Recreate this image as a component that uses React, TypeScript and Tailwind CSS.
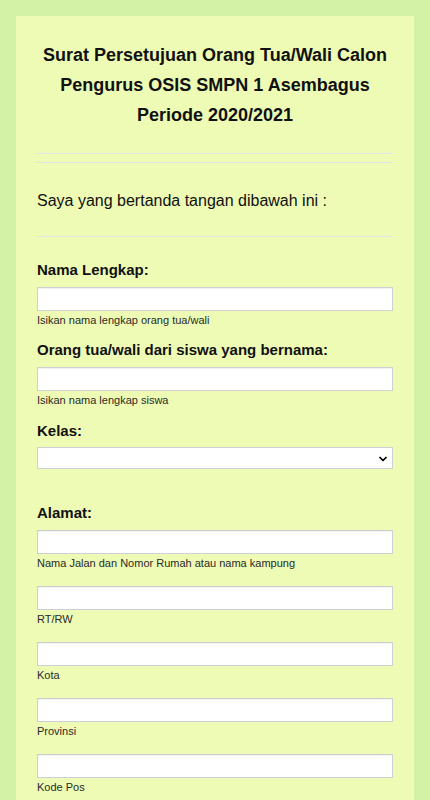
import { ChevronDown } from "lucide-react";

function Field({ label, help }: { label?: string; help: string }) {
  return (
    <div>
      {label && (
        <div className="text-[15px] font-bold leading-[18px] text-[#111] mb-2">
          {label}
        </div>
      )}
      <input
        type="text"
        className="block w-full h-6 bg-white border border-[#cfcfd6] shadow-[inset_0_1px_1px_rgba(0,0,0,0.06)] outline-none"
      />
      <div className="mt-[3px] text-[11px] leading-[13px] text-[#2a2a2a]">{help}</div>
    </div>
  );
}

export default function App() {
  return (
    <div
      className="min-h-[800px] bg-[#d4f2a6] px-4 pt-4"
      style={{ fontFamily: '"Liberation Sans", Arial, sans-serif' }}
    >
      <div className="bg-[#eefbb4] px-[21px] pt-[24px] pb-10">
        <h1 className="text-center text-[18px] font-bold leading-[30px] text-[#111]">
          Surat Persetujuan Orang Tua/Wali Calon
          <br />
          Pengurus OSIS SMPN 1 Asembagus
          <br />
          Periode 2020/2021
        </h1>

        <div className="mt-[23px] border-t border-[#e3e3e6]" />
        <div className="mt-2 border-t border-[#e3e3e6]" />

        <p className="mt-7 text-[16px] leading-[20px] text-[#111]">
          Saya yang bertanda tangan dibawah ini :
        </p>

        <div className="mt-[25px] border-t border-[#e3e3e6]" />

        <div className="mt-[24px]">
          <Field label="Nama Lengkap:" help="Isikan nama lengkap orang tua/wali" />
        </div>
        <div className="mt-[14px]">
          <Field label="Orang tua/wali dari siswa yang bernama:" help="Isikan nama lengkap siswa" />
        </div>
        <div className="mt-[15px]">
          <div className="text-[15px] font-bold leading-[18px] text-[#111] mb-[7px]">Kelas:</div>
          <div className="relative h-[22px] bg-white border border-[#cfcfd6]">
            <ChevronDown
              className="absolute right-[3px] top-[5px] w-3 h-3 text-black"
              strokeWidth={3.5}
            />
          </div>
        </div>

        <div className="mt-[35px]">
          <Field label="Alamat:" help="Nama Jalan dan Nomor Rumah atau nama kampung" />
        </div>
        <div className="mt-4">
          <Field help="RT/RW" />
        </div>
        <div className="mt-4">
          <Field help="Kota" />
        </div>
        <div className="mt-4">
          <Field help="Provinsi" />
        </div>
        <div className="mt-4">
          <Field help="Kode Pos" />
        </div>
      </div>
    </div>
  );
}
